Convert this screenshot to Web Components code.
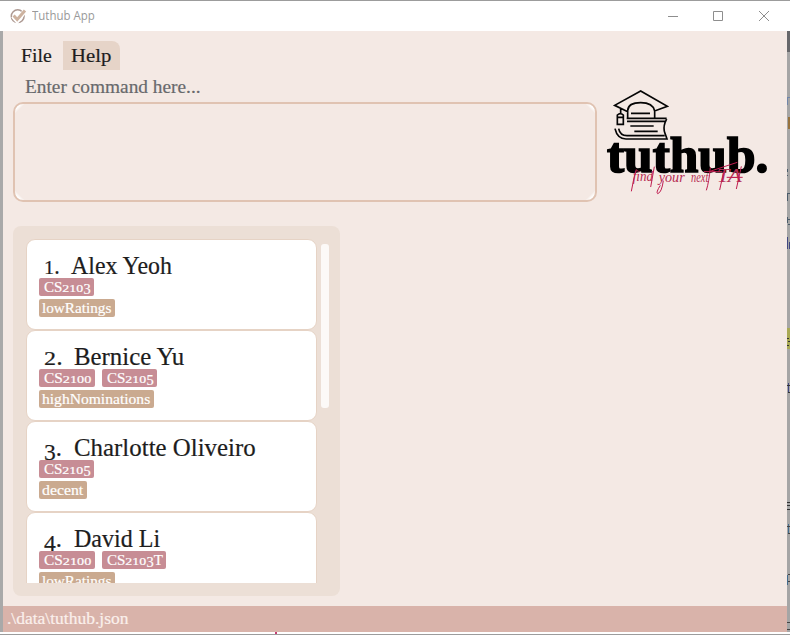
<!DOCTYPE html>
<html lang="en"><head><meta charset="utf-8"><title>Tuthub App</title>
<style>html,body{margin:0;width:790px;height:635px;overflow:hidden;background:#fff}</style></head>
<body><tuthub-app></tuthub-app>
<script>
const define=(name,html,init)=>customElements.define(name,class extends HTMLElement{
  connectedCallback(){ if(this.shadowRoot)return; const t=document.createElement('template');t.innerHTML=html;
    this.attachShadow({mode:'open'}).append(t.content.cloneNode(true)); if(init)init.call(this,this.shadowRoot); }
});

/* Serif label with old-style figures, stretched to a given width. */
define('serif-label',`<style>
:host{display:block;white-space:pre;font-family:"Liberation Serif",serif;-webkit-text-stroke:.2px currentColor;width:max-content}
span.t{display:inline-block;transform-origin:0 50%;line-height:inherit}
.x{font-size:.76em;line-height:0;display:inline-block;transform:scaleX(1.22);margin:0 .06em}
.d{font-size:.96em;line-height:0;vertical-align:-.16em}
</style><span class="t"></span>`,function(r){
  const s=r.querySelector('.t');
  for(const c of this.getAttribute('text')){
    if(/[0-9]/.test(c)){const e=document.createElement('span');e.className='012'.includes(c)?'x':'d';e.textContent=c;s.append(e)}
    else s.append(c);
  }
  const w=+this.getAttribute('w');
  this.style.width=w+'px';
  s.style.transform=`scaleX(${w/s.offsetWidth})`;
});

define('title-bar',`<style>
:host{display:flex;align-items:center;height:30px;background:#fff;box-sizing:border-box;padding:0 20px 0 10px;color:#999;font:12px/16px "Open Sans","Noto Sans",sans-serif}
.n{margin-left:5px;flex:1}.n b{font-weight:400;display:inline-block;transform-origin:0 50%}svg{display:block}
</style><svg width="17" height="17" viewBox="0 0 17 17" fill="none"><circle cx="7.7" cy="8.2" r="6.4" stroke="#ad9992" stroke-width="1.5"/><path d="M3 8l4.2 4.8L15.5 2.3" stroke="#fff" stroke-width="4.6"/><path d="M3.6 7.5l3.6 4L15 2.5" stroke="#cdb29f" stroke-width="3"/></svg>
<div class="n"><b>Tuthub App</b></div>
<svg width="102" height="12" viewBox="0 0 102 12" fill="none" stroke="#8e8e8e"><path d="M0 6.5h10M45.500 1.500h9v9h-9zM91 1l10 10M101 1l-10 10"/></svg>`,function(r){
 const b=r.querySelector('b');b.style.transform=`scaleX(${63/b.offsetWidth})`;
});

define('menu-bar',`<style>
:host{display:flex;height:29px;color:#1d1d1d;font-size:19.7px;line-height:29px}
div{padding:0 8px}.on{background:#e6d4c8;border-radius:0 8px 0 0;margin-left:3px;width:41px}
</style><div><serif-label text="File" w="31"></serif-label></div><div class="on"><serif-label text="Help" w="40"></serif-label></div>`);

define('result-box',`<style>:host{display:block;width:584px;height:100px;box-sizing:border-box;border:2px solid #e0c3b2;border-radius:10px;background:linear-gradient(45deg,#fff 4px,transparent 7px),linear-gradient(225deg,#fff 4px,transparent 7px),linear-gradient(135deg,#fff 4px,transparent 7px),linear-gradient(315deg,#fff 4px,transparent 7px),#f4e9e4}</style>`);

define('tuthub-logo',`<style>:host{display:block}svg{display:block}</style>
<svg width="187" height="120" viewBox="0 0 561 360" fill="none" stroke="#050505" stroke-width="5">
<path d="M122 33L44 76l39 19V91q2-23 39-23t42 25l38-14zM83 94v20M164 91v22M93 100h57M62 85v18M52 105q9-8 18 0v28H52zM52 112h18M80 115H200M81 124h114M200 117l-5 11q-6 17 0 32l6 17H78q-26 0-33-31M194 167H81q-21 0-25-21M91 138h70M103 154h70"/>
<text x="21" y="275" textLength="484" lengthAdjust="spacingAndGlyphs" font-family="Liberation Serif,serif" font-size="151" font-weight="700" fill="#000" stroke="#000" stroke-width="5">tuthub.</text>
<g font-family="Liberation Serif,serif" font-style="italic" font-size="42" fill="#b62b52" stroke="none">
<text x="98" y="303" textLength="61" lengthAdjust="spacingAndGlyphs">find</text><text x="176" y="306" textLength="78" lengthAdjust="spacingAndGlyphs">your</text><text x="273" y="305" textLength="52" lengthAdjust="spacingAndGlyphs">next</text><text x="350" y="306" font-size="56" textLength="75" lengthAdjust="spacingAndGlyphs">TA</text></g>
<g stroke="#c01d50" stroke-width="3"><path d="M109 268q-8 25-15 66M163 260l-11 61M190 302q-5 36-17 39-6-3 8-25M331 262q-4 44-12 69M371 276l-12 54M330 274l82-27M312 275h55M424 259l-15 68M380 292h48"/></g>
</svg>`);

define('tag-chip',`<style>:host{display:block;height:18px;border-radius:2px;box-sizing:border-box;color:#fff;font-size:15px;line-height:18px;background:#c78d95;padding-left:5px}
:host([kind=note]){background:#caaa90;padding-left:3px}</style><slot></slot>`);

define('tutor-card',`<style>
:host{display:block;flex:none;box-sizing:border-box;height:91px;border:1px solid #e6d3c5;border-radius:9px;background:#fff;padding:13px 0 0 12px}
.h{display:flex;height:25px;line-height:26px;font-size:24.6px;color:#1d1d1d;padding-left:5px}
.r{display:flex;gap:7px;margin-bottom:3px}
</style><div class="h"></div><div class="r mods"></div><div class="r notes"></div>`,function(r){
 const a=n=>this.getAttribute(n);
 const [nw,gap,ww]=a('sizes').split(',');
 r.querySelector('.h').innerHTML=`<serif-label text="${a('no')}." w="${nw}"></serif-label><serif-label style="margin-left:${gap}px" text="${a('name')}" w="${ww}"></serif-label>`;
 const chips=(s,k,p)=>s.split(',').map(v=>{const[t,w]=v.split(':');return `<tag-chip kind="${k}" style="width:${w}px"><serif-label text="${t}" w="${w-p}"></serif-label></tag-chip>`}).join('');
 r.querySelector('.mods').innerHTML=chips(a('mods'),'mod',8);
 r.querySelector('.notes').innerHTML=chips(a('note'),'note',7);
});

define('tutor-list',`<style>
:host{display:flex;gap:4px;width:327px;height:370px;box-sizing:border-box;padding:13px 11px 13px 13px;background:#ecdfd6;border-radius:8px}
.l{display:flex;flex-direction:column;width:291px;height:344px;overflow:hidden;background:#ecdfd6}
.s{width:8px;height:164px;margin-top:5px;border-radius:3px;background:#fcf9f7}
</style><div class="l">
<tutor-card no="1" name="Alex Yeoh" sizes="16,11,101" mods="CS2103:55" note="lowRatings:76"></tutor-card>
<tutor-card no="2" name="Bernice Yu" sizes="19,11,110" mods="CS2100:56,CS2105:55" note="highNominations:115"></tutor-card>
<tutor-card no="3" name="Charlotte Oliveiro" sizes="18,12,182" mods="CS2105:55" note="decent:48"></tutor-card>
<tutor-card no="4" name="David Li" sizes="18,12,86" mods="CS2100:56,CS2103T:64" note="lowRatings:76"></tutor-card>
</div><div class="s"></div>`);

/* Sliver of the dimmed desktop that shows past the window's right side. */
define('edge-strip',`<style>:host{display:block;width:3px;background:#a5a5a5}svg{display:block}</style>
<svg width="3" height="601" viewBox="0 31 3 601" shape-rendering="crispEdges"><path fill="#66676a" d="M0 31h3v21H0z"/><path fill="#7186a9" d="M0 97h1v8H0zM1 97h2v1H1z"/><path fill="#98733e" d="M1 117h2v12H1z"/><path fill="#4c5c6a" d="M0 169h1v3H0zM0 175h1v1H0zM0 193h1v8H0zM1 193h2v1H1zM0 217h1v6H0zM1 219h2v1H1zM1 224h2v1H1z"/><path fill="#414780" d="M0 237h1v12H0zM2 242h1v7H2zM1 383h1v9H1z"/><path fill="#a9a954" d="M0 328h3v21H0z"/><path fill="#333" d="M0 338h2v1H0zM1 341h2v1H1zM0 345h2v1H0zM0 385h3v1H0zM1 392h2v1H1zM0 502h3v1H0zM0 505h3v1H0zM0 509h3v1H0z"/><path fill="#436c8d" d="M1 524h1v9H1zM0 575h1v10H0z"/><path fill="#444" d="M0 526h3v1H0zM1 533h2v1H1zM1 574h2v1H1zM1 581h2v1H1zM0 622h3v1H0zM0 629h3v1H0z"/></svg>`);

define('status-bar',`<style>:host{display:block;height:26px;box-sizing:border-box;padding-left:4px;background:#d9b3aa;color:#fbf0ec;font-size:16.2px;line-height:27px}</style><serif-label text=".\\data\\tuthub.json" w="121"></serif-label>`);

define('tuthub-app',`<style>
:host{display:flex;flex-direction:column;width:790px;height:635px;box-sizing:border-box;border:solid #9c9c9c;border-width:1px 0;background:#fff}
.mid{display:flex;height:601px;flex:none}.left{width:3px;background:#a9a9a9}
.app{width:784px;display:flex;flex-direction:column;background:#f4e9e4}
.top{display:flex;height:195px;box-sizing:border-box;padding:10px 0 0 10px}
.cmd{width:587px}.prompt{height:32px;padding-left:12px;box-sizing:border-box;font-size:18.8px;line-height:34px;color:#68696c}
tuthub-logo{margin-top:39px}tutor-list{margin:0 0 10px 10px}
.foot{height:2px;background:linear-gradient(90deg,#fff 275px,#c53e73 275px 277px,#fff 277px)}
</style><title-bar></title-bar><div class="mid"><div class="left"></div><div class="app"><div class="top"><div class="cmd"><menu-bar></menu-bar><div class="prompt"><serif-label text="Enter command here..." w="176"></serif-label></div><result-box></result-box></div><tuthub-logo></tuthub-logo></div><tutor-list></tutor-list><status-bar></status-bar></div><edge-strip></edge-strip></div><div class="foot"></div>`);
</script></body></html>
